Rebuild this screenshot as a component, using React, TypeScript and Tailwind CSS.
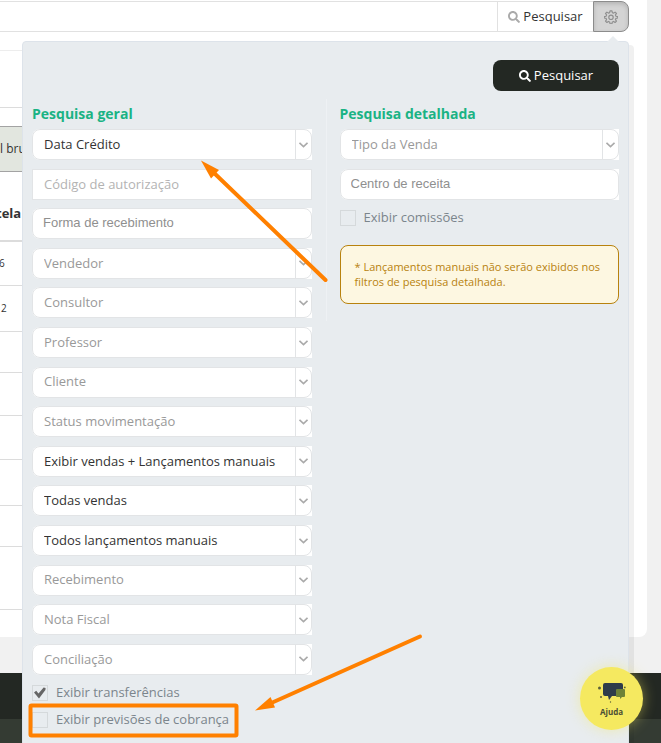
import { FaSearch } from "react-icons/fa";

interface SelectFieldProps {
  label: string;
  filled?: boolean;
}

const generalFilters: SelectFieldProps[] = [
  { label: "Vendedor" },
  { label: "Consultor" },
  { label: "Professor" },
  { label: "Cliente" },
  { label: "Status movimentação" },
  { label: "Exibir vendas + Lançamentos manuais", filled: true },
  { label: "Todas vendas", filled: true },
  { label: "Todos lançamentos manuais", filled: true },
  { label: "Recebimento" },
  { label: "Nota Fiscal" },
  { label: "Conciliação" },
];

function SelectField({ label, filled }: SelectFieldProps) {
  return (
    <div className="relative h-[31px] shrink-0 rounded-l-lg bg-white">
      <select
        aria-label={label}
        className={`block h-full w-full appearance-none rounded-lg border border-[#e2e4e6] bg-white pl-[11px] pr-5 text-[13px] outline-none ${
          filled ? "text-[#333]" : "text-[#999]"
        }`}
      >
        <option>{label}</option>
      </select>
      <span className="pointer-events-none absolute inset-y-px right-px flex w-4 items-center justify-center border-l border-[#e2e4e6]">
        <svg width="9" height="6" viewBox="0 0 9 6" fill="none" stroke="#aaa" strokeWidth="1.6">
          <path d="M0.5 0.8 4.5 4.6 8.5 0.8" />
        </svg>
      </span>
    </div>
  );
}

function TextField({ label }: { label: string }) {
  return (
    <div className="h-[31px] shrink-0 rounded-l-lg bg-white">
      <input
        type="text"
        aria-label={label}
        placeholder={label}
        className="block h-full w-full rounded-lg border border-[#e2e4e6] bg-white px-[10px] pb-[2px] font-['Liberation_Sans',sans-serif] text-[13px] outline-none placeholder:text-[#8f8f8f]"
      />
    </div>
  );
}

function CheckField({ label, checked }: { label: string; checked?: boolean }) {
  return (
    <label className="flex h-[17px] items-center gap-2 text-[13px] text-[#7b858c]">
      <span className="relative size-4 shrink-0">
        <input
          type="checkbox"
          defaultChecked={checked}
          className="peer block size-4 appearance-none border border-[#d5d9db] bg-[#e8ecef]"
        />
        <svg
          viewBox="0 0 16 16"
          className="pointer-events-none absolute inset-0 hidden size-4 fill-[#666] peer-checked:block"
        >
          <path d="M2 7.6 4.2 5.8 6.5 8.6 11.6 2.6 13.6 3 13.4 5 7 13.4Z" />
        </svg>
      </span>
      {label}
    </label>
  );
}

function GearIcon() {
  return (
    <svg width="14" height="14" viewBox="0 0 24 24" fill="none" stroke="#8f8f8f" strokeWidth="2" strokeLinejoin="round">
      <path d="M10.3 1.5h3.4l.6 3 2.2.9L19 3.6 21.4 6l-1.8 2.5.9 2.2 3 .6v2.4l-3 .6-.9 2.2 1.8 2.5L19 21.4l-2.5-1.8-2.2.9-.6 3h-3.4l-.6-3-2.2-.9L5 21.4 2.6 19l1.8-2.5-.9-2.2-3-.6v-2.4l3-.6.9-2.2L2.6 6 5 3.6l2.5 1.8 2.2-.9Z" />
      <circle cx="12" cy="12.5" r="3.8" />
    </svg>
  );
}

function ResultsTable() {
  return (
    <div className="mt-[18px] mr-[18px]">
      <table className="w-full border-collapse text-left text-[11px] text-[#333]">
        <thead>
          <tr className="h-[57px] border-y border-t-[#ededed] border-b-[#dcdcdc]">
            <td />
          </tr>
          <tr className="h-[19px]">
            <td />
          </tr>
          <tr className="h-[45px] border-y border-[#a3a3a3] bg-[#e2e6df]">
            <th className="p-0 text-xs font-normal">l bruto</th>
          </tr>
          <tr className="h-[69px] border-b-2 border-[#dcdcdc]">
            <th className="p-0 pt-4 -indent-1 text-[13px] font-bold">tela</th>
          </tr>
        </thead>
        <tbody>
          <tr className="h-[45px] border-b border-[#dcdcdc]">
            <td className="p-0 -indent-px text-[10px]">6</td>
          </tr>
          <tr className="h-[46px] border-b border-[#dcdcdc]">
            <td className="p-0 pl-px text-[10px]">2</td>
          </tr>
          <tr className="h-[41px] border-b border-[#dcdcdc]"><td /></tr>
          <tr className="h-[43px] border-b border-[#dcdcdc]"><td /></tr>
          <tr className="h-11 border-b border-[#dcdcdc]"><td /></tr>
          <tr className="h-[46px] border-b border-[#dcdcdc]"><td /></tr>
          <tr className="h-[41px] border-b border-[#dcdcdc]"><td /></tr>
          <tr className="h-[63px] border-b border-[#dcdcdc]"><td /></tr>
        </tbody>
      </table>
    </div>
  );
}

function FilterPanel() {
  return (
    <form className="absolute top-[41px] right-8 -bottom-10 left-[22px] rounded-t-[4px] border border-[#dde3ea] bg-[#e8ecef] px-[9px] pt-[18px] shadow-[5px_4px_0_rgba(0,0,0,0.06)]">
      <span className="absolute -top-[6px] right-[9px] border-x-6 border-b-6 border-x-transparent border-b-[#e8ecef]" />
      <div className="flex justify-end">
        <button
          type="button"
          className="flex h-[31px] w-[126px] items-center justify-center gap-[3px] rounded-lg bg-[#232823] text-[13px] text-white"
        >
          <FaSearch className="size-3" />
          Pesquisar
        </button>
      </div>

      <div className="relative mt-3 grid grid-cols-2 gap-7">
        <span className="absolute -top-1 left-1/2 h-[222px] w-px bg-[#eef1f4]" />
        <section>
          <h2 className="h-[26px] text-sm leading-[22px] font-bold text-[#1ab384]">Pesquisa geral</h2>
          <div className="flex h-[546px] flex-col justify-between">
            <SelectField label="Data Crédito" filled />
            <input
              type="text"
              aria-label="Código de autorização"
              placeholder="Código de autorização"
              className="block h-[31px] w-full shrink-0 border border-[#e2e4e6] bg-white px-[11px] text-[13px] outline-none placeholder:text-[#b3b3b3]"
            />
            <TextField label="Forma de recebimento" />
            {generalFilters.map((field) => (
              <SelectField key={field.label} {...field} />
            ))}
          </div>
          <div className="mt-[9px] flex flex-col gap-[10px]">
            <CheckField label="Exibir transferências" checked />
            <CheckField label="Exibir previsões de cobrança" />
          </div>
        </section>

        <section>
          <h2 className="h-[26px] text-sm leading-[22px] font-bold text-[#1ab384]">Pesquisa detalhada</h2>
          <div className="flex flex-col gap-[9px]">
            <SelectField label="Tipo da Venda" />
            <TextField label="Centro de receita" />
            <CheckField label="Exibir comissões" />
          </div>
          <p className="mt-[19px] rounded-lg border border-[#b8820e] bg-[#fdf7e1] px-[14px] pt-[13px] pb-[14px] text-[11px] leading-[15px] text-[#b8820e]">
            * Lançamentos manuais não serão exibidos nos filtros de pesquisa detalhada.
          </p>
        </section>
      </div>
    </form>
  );
}

function Annotations() {
  return (
    <svg
      className="pointer-events-none absolute top-0 left-0"
      width="661"
      height="743"
      viewBox="0 0 661 743"
      fill="none"
      stroke="#ff8000"
      strokeLinecap="round"
    >
      <path d="M212 171 325.5 280" strokeWidth="4" />
      <path d="M201 160.5 219 170 211 178.5Z" fill="#ff8000" stroke="none" />
      <path d="M269 704 420 636.5" strokeWidth="4" />
      <path d="M255 710.5 270.5 697 275 707.5Z" fill="#ff8000" stroke="none" />
      <rect x="30.5" y="705.5" width="206" height="30" rx="1" strokeWidth="4" />
    </svg>
  );
}

function HelpButton() {
  return (
    <button
      type="button"
      className="absolute right-[18px] bottom-[13px] flex size-[63px] flex-col items-center rounded-full bg-[#f5e960] pt-[15px] text-[8px] leading-[10px] font-bold text-[#4c4f35] shadow-[0_0_14px_rgba(245,233,96,0.45)]"
    >
      <svg width="28" height="21" viewBox="0 0 28 21" className="mb-1">
        <path d="M7 1h16q2 0 2 2v9q0 2-2 2h-9l-3 4-1-4H7q-2 0-2-2V3q0-2 2-2Z" fill="#2e3c4a" />
        <path d="M19 7h7q1 0 1 1v6q0 1-1 1h-2l-2 2v-2h-3q-1 0-1-1V8q0-1 1-1Z" fill="#6e8237" />
        <g fill="#5b6038">
          <circle cx="1.5" cy="6" r="1.5" />
          <circle cx="3" cy="15" r="1" />
          <circle cx="12.5" cy="20" r=".7" />
          <circle cx="26.8" cy="5.4" r=".9" />
        </g>
      </svg>
      Ajuda
    </button>
  );
}

export default function App() {
  return (
    <div className="relative flex h-screen flex-col overflow-hidden bg-[#f1f1f1] font-['Open_Sans',sans-serif]">
      <main className="mr-[14px] h-[637px] shrink-0 rounded-br-lg bg-white pt-px">
        <div className="mr-[18px] flex h-[31px]">
          <input type="text" aria-label="Buscar" className="min-w-0 flex-1 border-y border-[#e1e1e1] bg-white outline-none" />
          <button
            type="button"
            className="flex w-24 items-center justify-center gap-[3px] border border-r-0 border-[#e1e1e1] bg-white text-[13px] text-[#333]"
          >
            <FaSearch className="size-3 text-[#aaa]" />
            Pesquisar
          </button>
          <button
            type="button"
            aria-label="Filtros"
            className="flex w-9 items-center justify-center rounded-r-lg border border-[#8c8c8c] bg-[#d4d4d4] shadow-[inset_0_2px_4px_rgba(0,0,0,0.15)]"
          >
            <GearIcon />
          </button>
        </div>
        <ResultsTable />
      </main>
      <footer className="mt-9 flex flex-1 flex-col bg-[#232823]">
        <div className="mt-[46px] flex-1 bg-[#343b33]" />
      </footer>
      <FilterPanel />
      <Annotations />
      <HelpButton />
    </div>
  );
}
